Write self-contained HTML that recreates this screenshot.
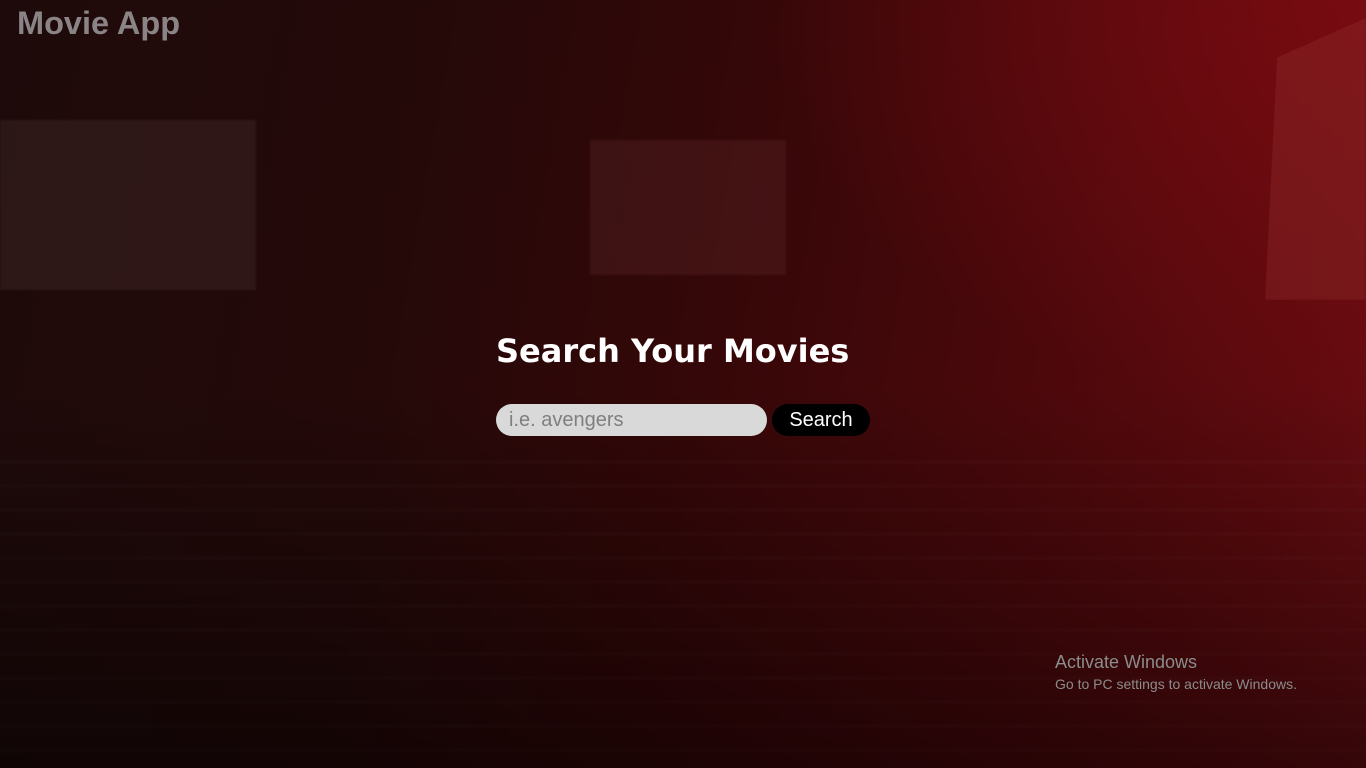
<!DOCTYPE html>
<html><head><meta charset="utf-8"><style>
html,body{margin:0;width:1366px;height:768px;overflow:hidden}
body{position:relative;font-family:"Liberation Sans",sans-serif;
background:
radial-gradient(ellipse 600px 420px at 1366px 0px, rgba(130,12,18,0.7), rgba(120,10,15,0) 100%),
linear-gradient(100deg,#1e0a0a 0%,#250909 30%,#340708 50%,#4a080b 72%,#5e0a0e 90%,#6a0d12 100%);}
.shade{position:absolute;left:0;right:0;bottom:0;height:380px;background:linear-gradient(180deg,rgba(0,0,0,0),rgba(0,0,0,0.5))}
.rows{position:absolute;left:0;right:0;top:440px;bottom:0;background:repeating-linear-gradient(180deg,rgba(255,255,255,0) 0 20px,rgba(255,255,255,0.015) 20px 24px);}
.scr{position:absolute;filter:blur(1px)}
h1.logo{position:absolute;left:17px;top:5px;margin:0;font:bold 32.5px "Liberation Sans",sans-serif;color:#8a8487}
h2{position:absolute;left:496px;top:332px;margin:0;font:bold 32px "DejaVu Sans",Verdana,sans-serif;color:#fff}
.inp{position:absolute;left:496px;top:404px;width:271px;height:32px;border-radius:16px;background:#d9d9d9;color:#7f7f7f;font-size:20px;line-height:32px;padding-left:13px;box-sizing:border-box}
.btn{position:absolute;left:772px;top:404px;width:98px;height:32px;border-radius:16px;background:#000;color:#fff;font-size:20px;line-height:32px;text-align:center}
.win{position:absolute;left:1055px;top:652px;color:#8c8c8c}
</style></head><body>
<div class="scr" style="left:0;top:120px;width:256px;height:170px;background:rgba(80,55,55,0.3)"></div>
<div class="scr" style="left:590px;top:140px;width:196px;height:135px;background:rgba(100,45,45,0.3)"></div>
<div class="scr" style="left:1265px;top:18px;width:101px;height:282px;background:rgba(150,50,50,0.32);clip-path:polygon(12% 14%,100% 0,100% 100%,0 100%)"></div>
<div class="rows"></div>
<div class="shade"></div>
<h1 class="logo">Movie App</h1>
<h2>Search Your Movies</h2>
<div class="inp">i.e. avengers</div>
<div class="btn">Search</div>
<div class="win"><div style="font-size:18px">Activate Windows</div><div style="font-size:14px;margin-top:3px">Go to PC settings to activate Windows.</div></div>
</body></html>
